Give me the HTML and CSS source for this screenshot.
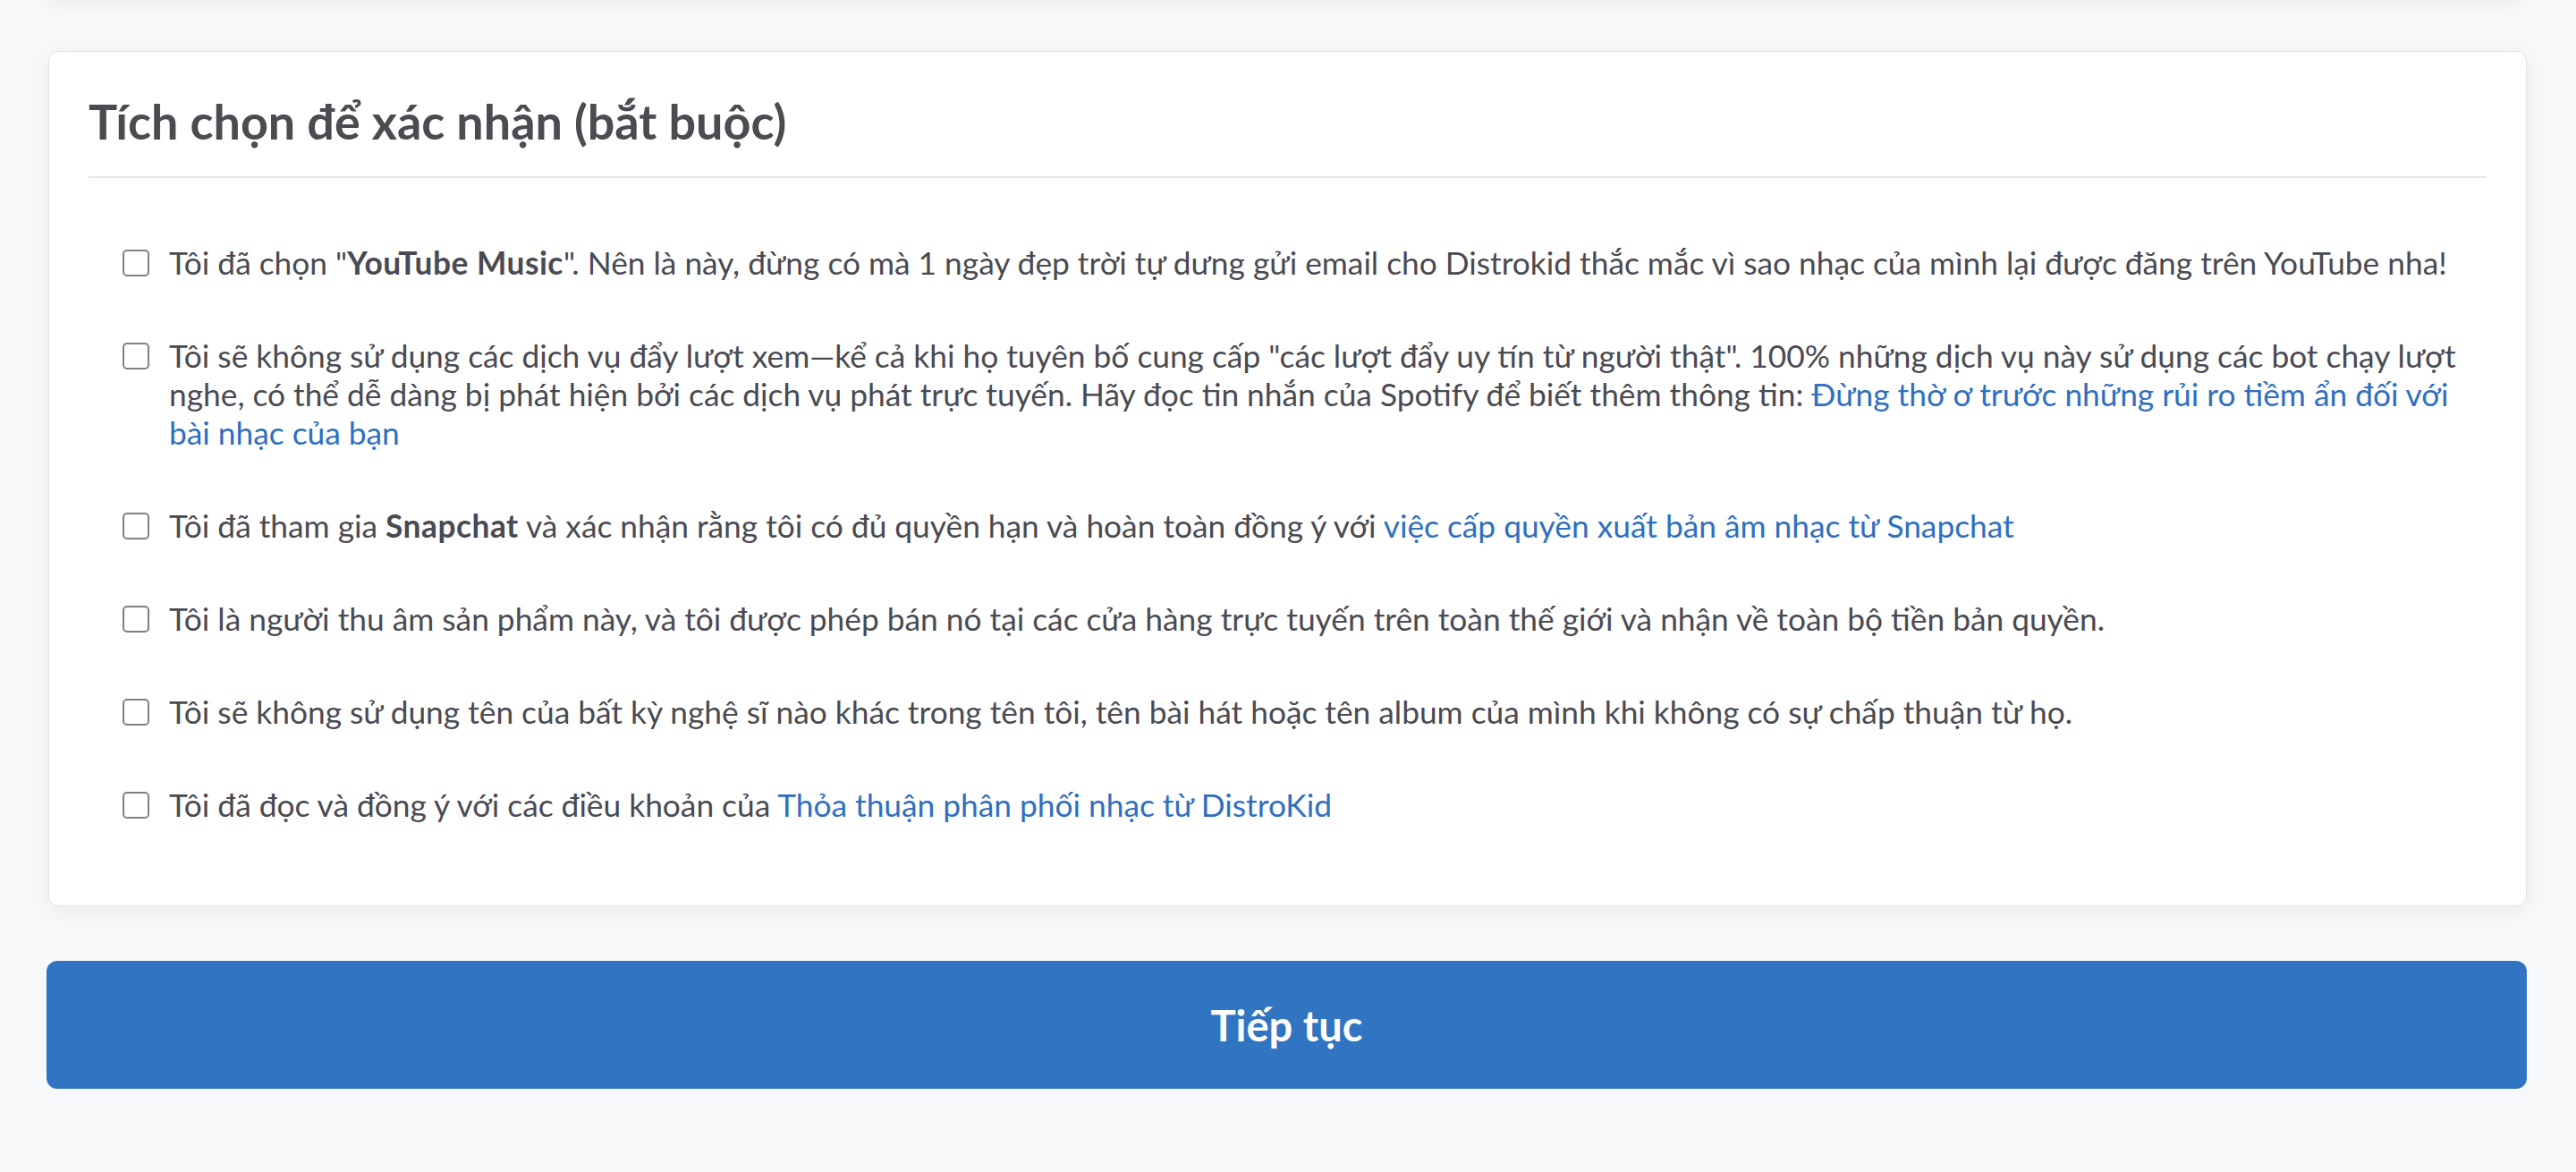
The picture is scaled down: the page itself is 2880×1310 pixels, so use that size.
FILE: index.html
```html
<!DOCTYPE html>
<html lang="vi">
<head>
<meta charset="utf-8">
<title>Tích chọn để xác nhận</title>
<link rel="stylesheet" href="styles.css">
</head>
<body>
<div class="page">
  <div class="prev-card"></div>
  <section class="card">
    <h2 class="card-title">Tích chọn để xác nhận (bắt buộc)</h2>
    <ul class="checks">
      <li class="check-row"><input type="checkbox" class="box"><label class="check-text">Tôi đã chọn "<b>YouTube Music</b>". Nên là này, đừng có mà 1 ngày đẹp trời tự dưng gửi email cho Distrokid thắc mắc vì sao nhạc của mình lại được đăng trên YouTube nha!</label></li>
      <li class="check-row"><input type="checkbox" class="box"><label class="check-text">Tôi sẽ không sử dụng các dịch vụ đẩy lượt xem—kể cả khi họ tuyên bố cung cấp "các lượt đẩy uy tín từ người thật". 100% những dịch vụ này sử dụng các bot chạy lượt nghe, có thể dễ dàng bị phát hiện bởi các dịch vụ phát trực tuyến. Hãy đọc tin nhắn của Spotify để biết thêm thông tin: <a class="link" href="#">Đừng thờ ơ trước những rủi ro tiềm ẩn đối với bài nhạc của bạn</a></label></li>
      <li class="check-row"><input type="checkbox" class="box"><label class="check-text">Tôi đã tham gia <b>Snapchat</b> và xác nhận rằng tôi có đủ quyền hạn và hoàn toàn đồng ý với <a class="link" href="#">việc cấp quyền xuất bản âm nhạc từ Snapchat</a></label></li>
      <li class="check-row"><input type="checkbox" class="box"><label class="check-text">Tôi là người thu âm sản phẩm này, và tôi được phép bán nó tại các cửa hàng trực tuyến trên toàn thế giới và nhận về toàn bộ tiền bản quyền.</label></li>
      <li class="check-row"><input type="checkbox" class="box"><label class="check-text">Tôi sẽ không sử dụng tên của bất kỳ nghệ sĩ nào khác trong tên tôi, tên bài hát hoặc tên album của mình khi không có sự chấp thuận từ họ.</label></li>
      <li class="check-row"><input type="checkbox" class="box"><label class="check-text">Tôi đã đọc và đồng ý với các điều khoản của <a class="link" href="#">Thỏa thuận phân phối nhạc từ DistroKid</a></label></li>
    </ul>
  </section>
  <button class="continue" type="button">Tiếp tục</button>
</div>
</body>
</html>
```

FILE: styles.css
```css
* { box-sizing: border-box; }
html, body { margin: 0; padding: 0; }
body {
  background: #f7f8fa;
  font-family: Lato, "Open Sans", "Noto Sans", sans-serif;
  color: #4a4a52;
  overflow: hidden;
}
.page {
  padding: 0 55px 0 54px;
  display: flex;
  flex-direction: column;
}
.prev-card {
  height: 30px;
  margin-top: -30px;
  background: #fff;
  border: 1px solid #e4e4e7;
  border-radius: 12px;
  box-shadow: 0 4px 22px rgba(0, 0, 0, 0.06);
  margin-right: 7px;
}
.card {
  margin-top: 57px;
  background: #fff;
  border: 1px solid #e4e4e7;
  border-radius: 12px;
  box-shadow: 0 4px 22px rgba(0, 0, 0, 0.06);
  padding: 45px 44px 30px 44px;
}
.card-title {
  margin: 0;
  font-size: 53.9px;
  line-height: 64px;
  font-weight: 700;
  color: #4b4b52;
  padding-bottom: 30px;
  border-bottom: 2px solid #e8e8ec;
}
.checks {
  list-style: none;
  margin: 0;
  padding: 73px 10px 0 0;
  display: flex;
  flex-direction: column;
  gap: 61px;
}
.check-row {
  display: flex;
  align-items: flex-start;
  padding-left: 38px;
}
.check-row:last-child { padding-bottom: 61px; }
.box {
  appearance: none;
  -webkit-appearance: none;
  flex: 0 0 auto;
  width: 30px;
  height: 30px;
  margin: 7px 22px 0 0;
  border: 2px solid #808080;
  border-radius: 5px;
  background: #fff;
}
.check-text {
  font-size: 35.3px;
  line-height: 43px;
  color: #4a4a52;
}
.check-text b { font-weight: 700; letter-spacing: 0.5px; }
.link {
  color: #2f6fc0;
  text-decoration: none;
}
.continue {
  margin-top: 61px;
  height: 143px;
  border: none;
  border-radius: 12px;
  background: #3174c1;
  color: #fff;
  font-family: Lato, "Open Sans", sans-serif;
  font-weight: 700;
  font-size: 47px;
  width: 2773px;
  margin-left: -2px;
}
```
